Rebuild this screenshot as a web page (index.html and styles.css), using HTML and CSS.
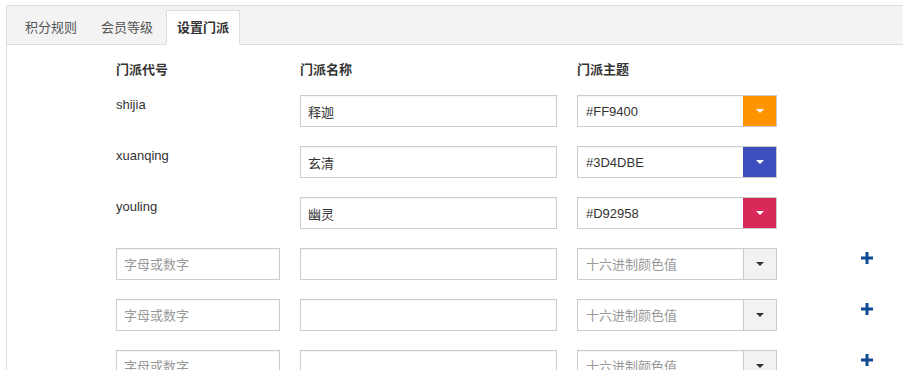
FILE: index.html
```html
<html>
    <head>
        <title>设置门派</title>
        <link rel="stylesheet" href="styles.css">
    </head>
    <body>
        <div class="panel">
            <ul class="tabs">
                <li class="tab">积分规则</li>
                <li class="tab">会员等级</li>
                <li class="tab active">设置门派</li>
            </ul>
            <div class="content">
                <div class="grid">
                    <div class="head">门派代号</div>
                    <div class="head">门派名称</div>
                    <div class="head">门派主题</div>
                    <div></div>

                    <div class="code">shijia</div>
                    <div><input class="field name" value="释迦"></div>
                    <div class="color-group">
                        <input class="field color" value="#FF9400">
                        <span class="addon" style="background-color:#FF9400"><i class="caret white"></i></span>
                    </div>
                    <div></div>

                    <div class="code">xuanqing</div>
                    <div><input class="field name" value="玄清"></div>
                    <div class="color-group">
                        <input class="field color" value="#3D4DBE">
                        <span class="addon" style="background-color:#3D4DBE"><i class="caret white"></i></span>
                    </div>
                    <div></div>

                    <div class="code">youling</div>
                    <div><input class="field name" value="幽灵"></div>
                    <div class="color-group">
                        <input class="field color" value="#D92958">
                        <span class="addon" style="background-color:#D92958"><i class="caret white"></i></span>
                    </div>
                    <div></div>

                    <div><input class="field code-input" placeholder="字母或数字"></div>
                    <div><input class="field name"></div>
                    <div class="color-group">
                        <input class="field color" placeholder="十六进制颜色值">
                        <span class="addon empty"><i class="caret"></i></span>
                    </div>
                    <div class="add"><svg width="12" height="12" viewBox="0 0 12 12"><path d="M6 0V12M0 6H12" stroke="#0f4a94" stroke-width="3"/></svg></div>

                    <div><input class="field code-input" placeholder="字母或数字"></div>
                    <div><input class="field name"></div>
                    <div class="color-group">
                        <input class="field color" placeholder="十六进制颜色值">
                        <span class="addon empty"><i class="caret"></i></span>
                    </div>
                    <div class="add"><svg width="12" height="12" viewBox="0 0 12 12"><path d="M6 0V12M0 6H12" stroke="#0f4a94" stroke-width="3"/></svg></div>

                    <div><input class="field code-input" placeholder="字母或数字"></div>
                    <div><input class="field name"></div>
                    <div class="color-group">
                        <input class="field color" placeholder="十六进制颜色值">
                        <span class="addon empty"><i class="caret"></i></span>
                    </div>
                    <div class="add"><svg width="12" height="12" viewBox="0 0 12 12"><path d="M6 0V12M0 6H12" stroke="#0f4a94" stroke-width="3"/></svg></div>
                </div>
            </div>
        </div>
    </body>
</html>
```

FILE: styles.css
```css
* {
    box-sizing: border-box;
}
body {
    margin: 0;
    background-color: #fff;
    color: #333;
    font-family: "Liberation Sans", "Noto Sans CJK SC", sans-serif;
    font-size: 13px;
}
.panel {
    margin: 5px 0 0 6px;
    border-top: 1px solid #ddd;
    border-left: 1px solid #ddd;
    height: 365px;
    overflow: hidden;
}
.tabs {
    list-style: none;
    margin: 0;
    padding: 4px 0 0 7px;
    display: flex;
    background-color: #f3f3f3;
    border-bottom: 1px solid #ddd;
    height: 39px;
}
.tab {
    padding: 0 10px;
    margin-right: 2px;
    line-height: 33px;
    height: 35px;
    border: 1px solid transparent;
    color: #555;
}
.tab.active {
    background-color: #fff;
    border-color: #ddd;
    border-bottom-color: #fff;
    color: #333;
    font-weight: bold;
}
.content {
    padding: 15px 0 0 109px;
}
.grid {
    display: grid;
    grid-template-columns: 184px 277px 284px 20px;
    row-gap: 19px;
}
.head {
    font-weight: bold;
    line-height: 20px;
    margin-bottom: -4px;
}
.code {
    line-height: 18px;
    padding-top: 1px;
}
.field {
    height: 32px;
    border: 1px solid #ccc;
    padding: 0 7px;
    font-family: inherit;
    font-size: 13px;
    color: #333;
    outline: none;
    box-shadow: inset 0 1px 1px rgba(0, 0, 0, 0.04);
}
.field::placeholder {
    color: #999;
}
.code-input {
    width: 164px;
}
.name {
    width: 257px;
}
.color-group {
    display: flex;
    width: 200px;
    height: 32px;
    border: 1px solid #ccc;
}
.color-group .field {
    border: none;
    height: 30px;
    flex: 1;
    min-width: 0;
    padding: 0 8px;
}
.addon {
    width: 33px;
    display: flex;
    align-items: center;
    justify-content: center;
}
.addon.empty {
    background-color: #f2f2f2;
    border-left: 1px solid #ccc;
}
.caret {
    width: 0;
    height: 0;
    border-left: 4px solid transparent;
    border-right: 4px solid transparent;
    border-top: 4px solid #333;
}
.caret.white {
    border-top-color: #fff;
}
.add {
    padding-top: 4px;
    line-height: 0;
}
```
